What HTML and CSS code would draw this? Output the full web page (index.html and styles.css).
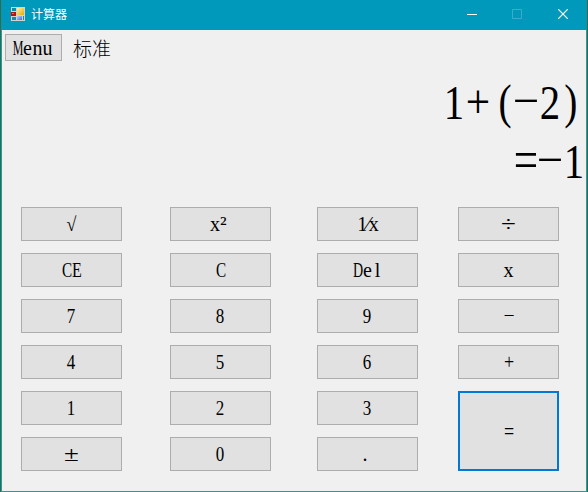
FILE: index.html
```html
<!DOCTYPE html>
<html lang="zh-CN">
<head>
<meta charset="utf-8">
<title>计算器</title>
<link rel="stylesheet" href="styles.css">
</head>
<body>
<div class="window">
  <header class="titlebar">
    <svg class="app-icon" width="14" height="14" viewBox="0 0 14 14" shape-rendering="crispEdges">
      <defs><linearGradient id="gold" x2="1" y2="1"><stop stop-color="#fff0a0"/><stop offset="1" stop-color="#e9a900"/></linearGradient>
      <linearGradient id="blue" x2="1" y2="1"><stop stop-color="#b8d2ff"/><stop offset="1" stop-color="#3f70d8"/></linearGradient></defs>
      <path fill="#d6d2cc" d="M0 0h14v14H0z"/>
      <path fill="#128bb0" d="M1 1h4v3H1zM1 10h4v3H1z"/>
      <path fill="#b51210" d="M0 5h5v4H0z"/><path fill="#ef6a5c" d="M1 6h2v1H1z"/>
      <path fill="url(#gold)" d="M6 1h7v7H6z"/>
      <path fill="url(#blue)" d="M6 9h5v4H6z"/><path fill="#128bb0" d="M12 9h1v4h-1z"/>
    </svg>
    <span class="title">计算器</span>
    <div class="controls">
      <svg width="10" height="10"><path class="line" d="M0 5.5h10"/></svg>
      <svg class="disabled" width="10" height="10"><path class="line" d="M.5.5h9v9h-9z"/></svg>
      <svg width="10" height="10"><path class="cross" d="M.3.3l9.4 9.4M9.7.3L.3 9.7"/></svg>
    </div>
  </header>
  <nav class="toolbar">
    <button class="menu"><span class="cell cap-m">M</span><span class="cell">e</span><span class="cell">n</span><span class="cell">u</span></button>
    <span class="mode">标准</span>
  </nav>
  <section class="display">
    <div class="expression"><span class="cell digit">1</span><span class="cell plus">+</span><span class="cell paren open">(</span><span class="cell minus">-</span><span class="cell digit">2</span><span class="cell paren close">)</span></div>
    <div class="result"><span class="cell equals">=</span><span class="cell minus">-</span><span class="cell digit">1</span></div>
  </section>
  <main class="keys">
    <button><span class="root">√</span></button>
    <button><span class="cell">x</span><span class="cell square">²</span></button>
    <button><span class="fraction">1⁄x</span></button>
    <button><span class="divide">÷</span></button>
    <button><span class="cell cap-c">C</span><span class="cell cap-e">E</span></button>
    <button><span class="cell cap-c">C</span></button>
    <button><span class="cell cap-d">D</span><span class="cell">e</span><span class="cell">l</span></button>
    <button><span class="cell">x</span></button>
    <button><span class="digit">7</span></button><button><span class="digit">8</span></button><button><span class="digit">9</span></button>
    <button><span class="cell minus">-</span></button>
    <button><span class="digit">4</span></button><button><span class="digit">5</span></button><button><span class="digit">6</span></button>
    <button><span class="cell plus">+</span></button>
    <button><span class="digit">1</span></button><button><span class="digit">2</span></button><button><span class="digit">3</span></button>
    <button class="enter"><span class="cell equals">=</span></button>
    <button><span class="sign">±</span></button>
    <button><span class="digit">0</span></button>
    <button><span class="cell dot">.</span></button>
  </main>
</div>
</body>
</html>
```
FILE: styles.css
```css
* { box-sizing: border-box; }
body {
  margin: 0;
  width: 588px;
  height: 492px;
  padding: 0 1px;
  overflow: hidden;
  background: #3a6840;
  color: #000;
  font-family: "Liberation Serif", "Noto Sans CJK SC", serif;
}
.window {
  height: 492px;
  border: solid #199eb2;
  border-width: 0 1px 1px;
  background: #f0f0f0;
}
.titlebar {
  display: flex;
  align-items: center;
  height: 30px;
  margin: 0 -1px;
  padding: 0 19px 0 10px;
  background: #0099bc;
  color: #fff;
}
.app-icon { margin-top: -2px; }
.title {
  margin-left: 6px;
  margin-top: -2px;
  font: 12px/18px "Noto Sans CJK SC", sans-serif;
}
.controls { display: flex; gap: 35px; margin: -2px 0 0 auto; }
.controls svg { display: block; }
.line, .cross { fill: none; stroke: #fff; }
.cross { stroke-width: 1.2; }
.disabled { margin-right: 1px; opacity: .22; }
button {
  display: flex;
  align-items: center;
  justify-content: center;
  border: 1px solid #adadad;
  border-radius: 0;
  padding: 0;
  background: #e1e1e1;
  color: #000;
  font: 20px/24px "Liberation Serif", "Noto Sans CJK SC", serif;
}
.toolbar {
  display: flex;
  align-items: center;
  gap: 11px;
  height: 36px;
  padding: 0 0 1px 3px;
}
.menu { width: 57px; height: 27px; padding-right: 2px; }
.mode { font: 300 19px/24px "Noto Sans CJK SC", sans-serif; }
.cell {
  display: inline-flex;
  justify-content: center;
  width: .5em;
}
.digit { transform: scaleX(.85); }
.keys .digit { margin-right: 1px; }
.cap-m { transform: scaleX(.6); }
.cap-c { transform: scaleX(.76); }
.cap-e { transform: scaleX(.8); }
.cap-d { transform: scaleX(.7); }
.plus { transform: translateY(-.02em) scaleX(.9); }
.equals { transform: translateY(-.04em) scale(.9, 1.2); }
.minus { transform: translateY(-.1em) scale(1.75, .65); }
.paren { transform: translateY(-.02em) scaleX(.82); }
.open { padding-left: .16em; }
.close { padding-right: .16em; }
.display {
  height: 129px;
  padding: 7px 0 0;
  font-size: 48px;
  line-height: 59px;
}
.expression, .result { display: flex; justify-content: flex-end; }
.keys {
  display: grid;
  grid-template-columns: 149px 147px 141px 101px;
  grid-auto-rows: 34px;
  row-gap: 12px;
  padding: 12px 0 0 19px;
}
.keys button { width: 101px; }
.keys .enter {
  grid-row: span 2;
  border: 2px solid #0078d7;
}
.root { transform: scaleX(.9); }
.square { justify-content: flex-start; font-size: 22px; }
.fraction { letter-spacing: -1px; }
.divide, .sign { transform: scaleX(1.35); }
.dot { padding-right: 5px; }
```
